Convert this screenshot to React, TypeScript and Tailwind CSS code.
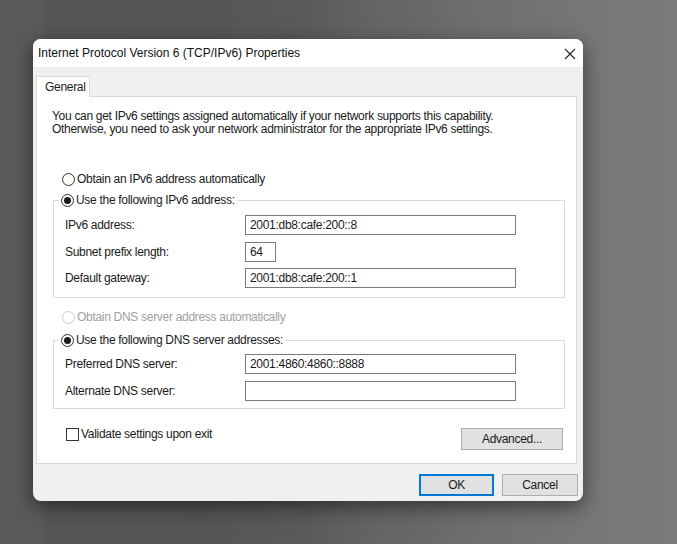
import { ReactNode } from 'react';

function Radio({ checked = false, disabled = false }: { checked?: boolean; disabled?: boolean }) {
  return (
    <span
      className={`w-[13px] h-[13px] rounded-full border bg-white flex items-center justify-center shrink-0 ${
        disabled ? 'border-[#cccccc]' : 'border-[#333333]'
      }`}
    >
      {checked && <span className="w-[7px] h-[7px] rounded-full bg-[#1b1b1b]"></span>}
    </span>
  );
}

function Field({ label, value = '', width = 'w-[271px]' }: { label: string; value?: string; width?: string }) {
  return (
    <div className="flex items-center h-[20px]">
      <span className="w-[180px]">{label}</span>
      <div className={`${width} h-[20px] border border-[#7a7a7a] bg-white flex items-center pl-[4px]`}>{value}</div>
    </div>
  );
}

function Group({ legend, children }: { legend: string; children: ReactNode }) {
  return (
    <fieldset className="ml-[16px] mr-[11px] border border-[#dcdcdc] pl-[5px]">
      <legend className="flex items-center gap-[2px] px-[2px] h-[14px]">
        <Radio checked />
        <span>{legend}</span>
      </legend>
      <div className="pl-[6px]">{children}</div>
    </fieldset>
  );
}

function Button({ children, primary = false, width }: { children: ReactNode; primary?: boolean; width: string }) {
  return (
    <div
      className={`${width} h-[22px] flex items-center justify-center bg-[#e1e1e1] text-[#1a1a1a] ${
        primary ? 'border-2 border-[#0078d7]' : 'border border-[#adadad]'
      }`}
    >
      {children}
    </div>
  );
}

export default function App() {
  return (
    <div className="w-[677px] h-[544px] overflow-hidden pt-[39px] pl-[33px] bg-[linear-gradient(90deg,#5b5b5b_0%,#595959_6%,#565656_7%,#555555_30%,#5a5a5a_45%,#626262_52%,#686868_62%,#6e6e6e_70%,#737373_80%,#777777_88%,#7b7b7b_100%)] font-['Liberation_Sans',Arial,sans-serif] text-[12px] tracking-[-0.3px] text-[#1a1a1a]">
      <div className="w-[550px] h-[462px] rounded-[8px] bg-[#f0f0f0] shadow-[0_6px_20px_rgba(0,0,0,0.5)] flex flex-col overflow-hidden">
        {/* title bar */}
        <div className="h-[28px] bg-white flex items-center justify-between pl-[5px] pr-[7px] shrink-0">
          <span className="text-[12px] tracking-normal text-[#111]">Internet Protocol Version 6 (TCP/IPv6) Properties</span>
          <svg width="12" height="12" viewBox="0 0 12 12" className="mt-[2px]">
            <path d="M1 1 L11 11 M11 1 L1 11" stroke="#222" strokeWidth="1.1" fill="none" />
          </svg>
        </div>

        {/* tabs */}
        <div className="pl-[3px] pr-[6px] pt-[9px]">
          <div className="w-[54px] h-[21px] bg-white border border-b-0 border-[#d9d9d9] flex items-center pl-[8px] -mb-px relative">
            General
          </div>
          <div className="h-[368px] bg-white border border-[#d9d9d9] flex flex-col">
            <p className="ml-[15px] mt-[13px] leading-[13px]">
              You can get IPv6 settings assigned automatically if your network supports this capability.
              <br />
              Otherwise, you need to ask your network administrator for the appropriate IPv6 settings.
            </p>

            <div className="ml-[25px] mt-[36px] flex items-center gap-[2px] h-[14px]">
              <Radio />
              <span>Obtain an IPv6 address automatically</span>
            </div>

            <div className="mt-[7px]">
              <Group legend="Use the following IPv6 address:">
                <div className="flex flex-col gap-[6.5px] pt-[8px] pb-[9px]">
                  <Field label="IPv6 address:" value="2001:db8:cafe:200::8" />
                  <Field label="Subnet prefix length:" value="64" width="w-[31px]" />
                  <Field label="Default gateway:" value="2001:db8:cafe:200::1" />
                </div>
              </Group>
            </div>

            <div className="ml-[25px] mt-[12px] flex items-center gap-[2px] h-[14px] text-[#a0a0a0]">
              <Radio disabled />
              <span>Obtain DNS server address automatically</span>
            </div>

            <div className="mt-[9px]">
              <Group legend="Use the following DNS server addresses:">
                <div className="flex flex-col gap-[7px] pt-[7px] pb-[7px]">
                  <Field label="Preferred DNS server:" value="2001:4860:4860::8888" />
                  <Field label="Alternate DNS server:" />
                </div>
              </Group>
            </div>

            <div className="mt-[17px] ml-[29px] mr-[13px] flex items-start justify-between">
              <div className="flex items-center gap-[2px] h-[14px] mt-[1px]">
                <span className="w-[13px] h-[13px] border border-[#333333] bg-white"></span>
                <span>Validate settings upon exit</span>
              </div>
              <div className="mt-[2px]">
                <Button width="w-[102px]">Advanced...</Button>
              </div>
            </div>
          </div>
        </div>

        {/* footer buttons */}
        <div className="flex justify-end gap-[8px] pr-[5px] mt-[10px]">
          <Button primary width="w-[75px]">OK</Button>
          <Button width="w-[76px]">Cancel</Button>
        </div>
      </div>
    </div>
  );
}
